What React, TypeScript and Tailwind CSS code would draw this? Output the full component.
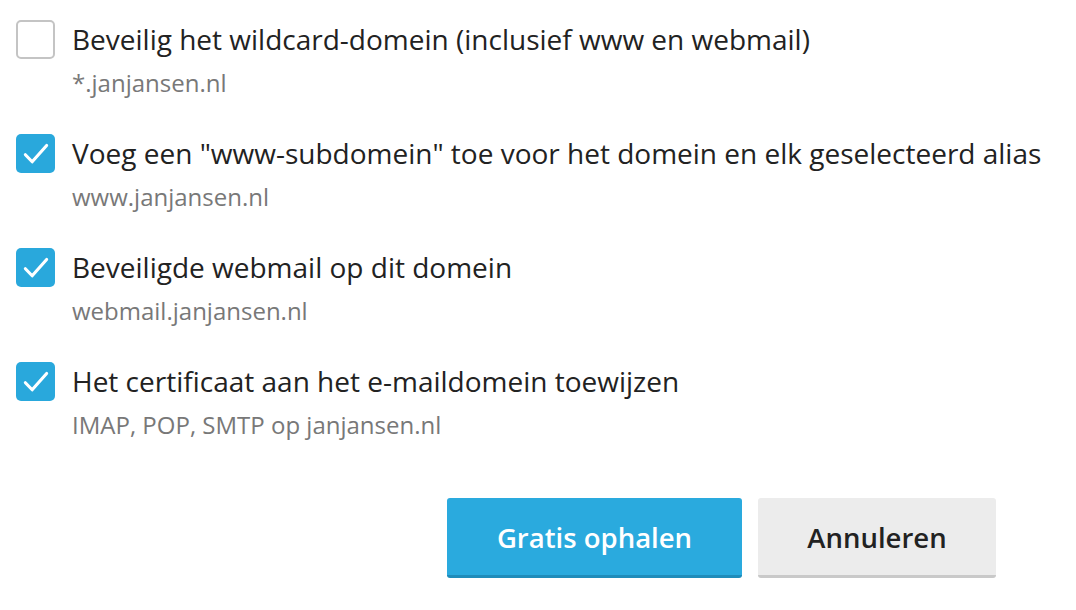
import React, { useState } from 'react';

interface Option {
  id: string;
  label: string;
  hint: string;
  checked: boolean;
}

const OPTIONS: Option[] = [
  { id: 'wildcard', label: 'Beveilig het wildcard-domein (inclusief www en webmail)', hint: '*.janjansen.nl', checked: false },
  { id: 'www', label: 'Voeg een "www-subdomein" toe voor het domein en elk geselecteerd alias', hint: 'www.janjansen.nl', checked: true },
  { id: 'webmail', label: 'Beveiligde webmail op dit domein', hint: 'webmail.janjansen.nl', checked: true },
  { id: 'mail', label: 'Het certificaat aan het e-maildomein toewijzen', hint: 'IMAP, POP, SMTP op janjansen.nl', checked: true },
];

const CheckBox = ({ checked, onClick }: { checked: boolean; onClick: () => void }) => (
  <button
    onClick={onClick}
    className={`flex h-[39px] w-[39px] shrink-0 items-center justify-center rounded-[5px] ${
      checked ? 'bg-[#29a8dc]' : 'border-2 border-[#c4c4c4] bg-white'
    }`}
  >
    {checked && (
      <svg viewBox="0 0 24 24" className="h-[34px] w-[34px]" fill="none" stroke="white" strokeWidth={2.2} strokeLinecap="round" strokeLinejoin="round">
        <path d="M4.5 12.5l4.8 5L19.5 6" />
      </svg>
    )}
  </button>
);

export default function App() {
  const [opts, setOpts] = useState(OPTIONS);

  const toggle = (id: string) =>
    setOpts((prev) => prev.map((o) => (o.id === id ? { ...o, checked: !o.checked } : o)));

  return (
    <div className="h-[610px] w-[1076px] bg-white font-['Open_Sans','Noto_Sans',sans-serif]">
      <div className="flex flex-col gap-[36px] pl-4 pt-[20px]">
        {opts.map((o) => (
          <div key={o.id} className="flex gap-[17px]">
            <CheckBox checked={o.checked} onClick={() => toggle(o.id)} />
            <div className="flex flex-col">
              <span className="text-[28px] leading-[39px] text-[#222]">{o.label}</span>
              <span className="mt-[9px] text-[24px] leading-[30px] text-[#787878]">{o.hint}</span>
            </div>
          </div>
        ))}
      </div>
      <div className="mt-[58px] flex gap-4 pl-[447px]">
        <button className="h-[80px] w-[295px] rounded-[3px] border-b-[3px] border-[#1f8cba] bg-[#2aaade] pt-[2px] text-[27.5px] font-semibold text-white">
          Gratis ophalen
        </button>
        <button className="h-[80px] w-[238px] rounded-[3px] border-b-[3px] border-[#c9c9c9] bg-[#ececec] pt-[2px] text-[27.5px] font-semibold text-[#222]">
          Annuleren
        </button>
      </div>
    </div>
  );
}
